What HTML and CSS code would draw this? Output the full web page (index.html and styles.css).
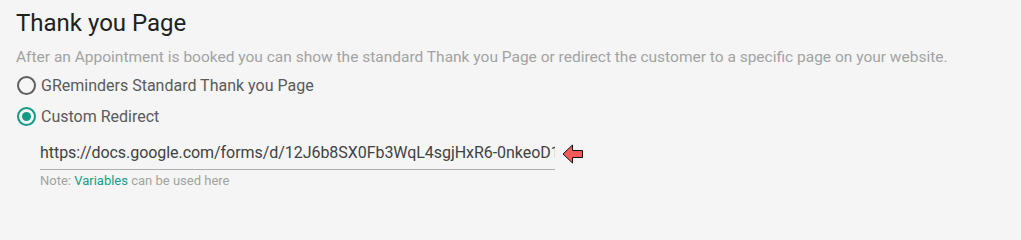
FILE: index.html
```html
<!DOCTYPE html>
<html>
<head>
<meta charset="utf-8">
<link rel="stylesheet" href="styles.css">
</head>
<body>
<div class="section">
  <h2 class="title">Thank you Page</h2>
  <p class="desc">After an Appointment is booked you can show the standard Thank you Page or redirect the customer to a specific page on your website.</p>
  <div class="radio-row">
    <span class="radio"></span>
    <span class="label">GReminders Standard Thank you Page</span>
  </div>
  <div class="radio-row">
    <span class="radio checked"><span class="dot"></span></span>
    <span class="label">Custom Redirect</span>
  </div>
  <div class="field">
    <div class="input-row">
      <div class="input">https://docs.google.com/forms/d/12J6b8SX0Fb3WqL4sgjHxR6-0nkeoD1</div>
      <svg class="arrow" width="22" height="21" viewBox="0 0 22 21">
        <path d="M1 10 L10.5 1 L10.5 6.5 L20.5 6.5 L20.5 13.5 L10.5 13.5 L10.5 19 Z" fill="#f55a5a" stroke="#111" stroke-width="1" stroke-linejoin="miter"/>
      </svg>
    </div>
    <div class="note">Note: <span class="link">Variables</span> can be used here</div>
  </div>
</div>
</body>
</html>
```

FILE: styles.css
```css
html, body {
  margin: 0;
  padding: 0;
  background: #f4f5f4;
}
body {
  font-family: Roboto, "Liberation Sans", sans-serif;
  width: 1021px;
  height: 217px;
  overflow: hidden;
}
.section {
  padding: 8px 16px 0 16px;
}
.title {
  margin: 0;
  font-size: 24px;
  font-weight: 400;
  color: #212121;
  line-height: 31px;
}
.desc {
  margin: 8px 0 0 0;
  font-size: 15.5px;
  line-height: 20px;
  color: #a3a3a3;
}
.radio-row {
  display: flex;
  align-items: center;
  height: 20px;
  margin-top: 8px;
}
.radio-row + .radio-row {
  margin-top: 11px;
}
.radio {
  box-sizing: border-box;
  width: 19px;
  height: 19px;
  border: 2px solid #5f5f5f;
  border-radius: 50%;
  margin-left: 1px;
  margin-right: 5px;
  display: flex;
  align-items: center;
  justify-content: center;
}
.radio.checked {
  border-color: #139a86;
}
.dot {
  width: 9px;
  height: 9px;
  border-radius: 50%;
  background: #139a86;
}
.label {
  font-size: 16px;
  color: #5a5a5a;
}
.field {
  margin-left: 24px;
  margin-top: 16px;
}
.input-row {
  display: flex;
  align-items: center;
}
.input {
  width: 515px;
  box-sizing: border-box;
  font-size: 16px;
  letter-spacing: -0.05px;
  color: #424242;
  line-height: 22px;
  padding-bottom: 5px;
  border-bottom: 1px solid #b0b0b0;
  white-space: nowrap;
  overflow: hidden;
}
.arrow {
  margin-left: 7px;
  margin-top: -4px;
}
.note {
  margin-top: 3px;
  font-size: 13px;
  color: #a3a3a3;
}
.link {
  color: #179c88;
}
```
